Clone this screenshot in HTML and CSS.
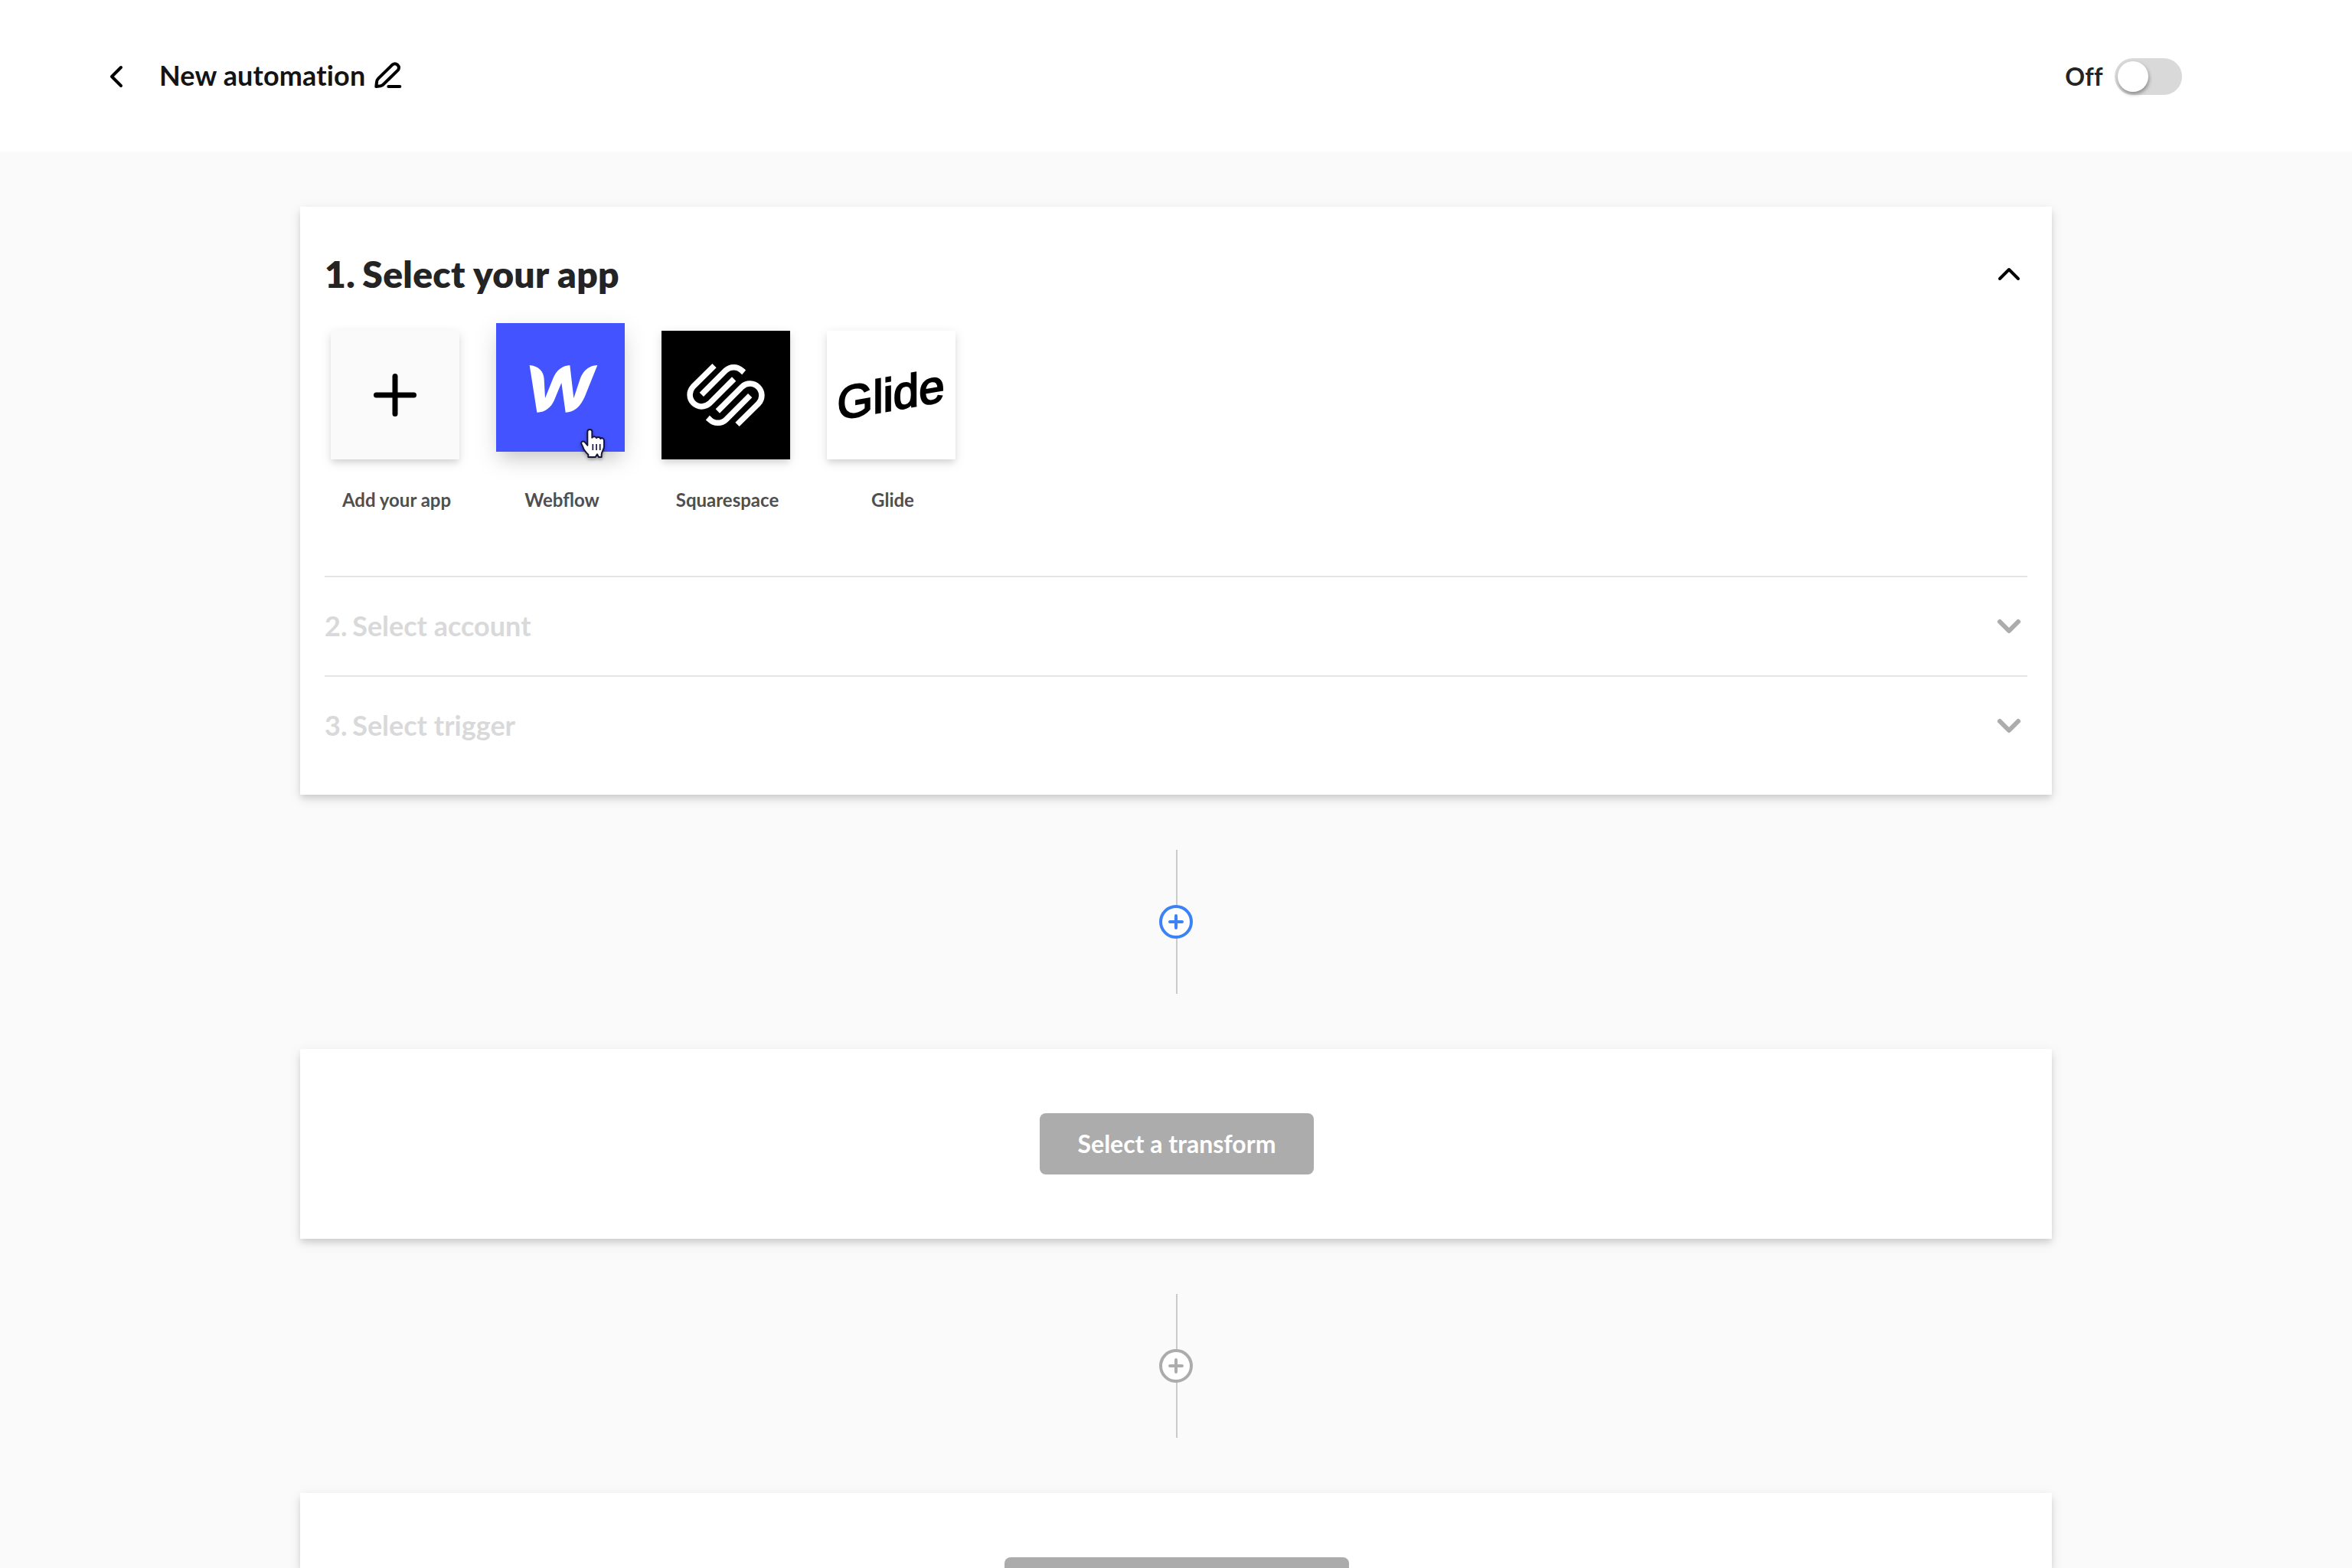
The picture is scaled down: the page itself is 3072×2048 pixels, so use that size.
FILE: index.html
```html
<!DOCTYPE html>
<html lang="en">
<head>
<meta charset="utf-8">
<title>New automation</title>
<link rel="stylesheet" href="styles.css">
</head>
<body>
<header class="topbar">
  <div class="topbar-left">
    <svg class="icon" viewBox="0 0 24 24" aria-hidden="true"><path d="M15 6 9 12l6 6"/></svg>
    <h1 class="name">New automation</h1>
    <svg class="pencil" viewBox="0 0 114 114" aria-hidden="true"><path d="M74 16 18 71Q12 77 12 85L10 102 27 100Q34 99 40 92L96 37A15.500 15.500 0 0 0 74 16ZM58 102H103"/></svg>
  </div>
  <div class="power">
    <span class="power-label">Off</span>
    <span class="switch"><span class="knob"></span></span>
  </div>
</header>

<main class="flow">
  <section class="card steps">
    <div class="step-head">
      <h2 class="step-title"><span class="num">1.</span> Select your app</h2>
      <svg class="icon" viewBox="0 0 24 24" aria-hidden="true"><path d="m6 15 6-6 6 6"/></svg>
    </div>
    <div class="apps">
      <div class="app">
        <div class="tile tile-add">
          <svg class="art" viewBox="0 0 168 168" aria-hidden="true"><path class="plus" d="M84 59.500V108.500M59.500 84H108.500"/></svg>
        </div>
        <span class="app-label">Add your app</span>
      </div>
      <div class="app">
        <div class="tile tile-webflow">
          <svg class="art" viewBox="54 66 504 504" aria-hidden="true"><path fill="#fff" d="M185 231C218 233 241 255 242 285L246 360 277 283C290 250 315 232 343 231L358 360 383 285C393 254 418 232 451 231L403 350C386 392 360 416 326 416L310 300 281 370C270 396 245 417 214 416Z"/></svg>
          <svg class="cursor" viewBox="380 474 105 126" aria-hidden="true">
            <path fill="#fff" stroke="#16163a" stroke-width="6" stroke-linejoin="round" d="M411 545V491C411 480 429 480 429 491V515C433 509 443 509 446 516C451 511 460 512 462 519C468 513 476 518 476 528V549C476 562 467 568 466 581V591H455L449 580 442 591H414V581C404 572 396 561 393 551L387 539C385 529 395 527 401 533Z"/>
            <path stroke="#16163a" stroke-width="5" d="M432 540V564M446 540V564M460 540V564"/>
          </svg>
        </div>
        <span class="app-label">Webflow</span>
      </div>
      <div class="app">
        <div class="tile tile-squarespace">
          <svg class="art" viewBox="72 96 504 504" aria-hidden="true"><path fill="none" stroke="#fff" stroke-width="22.500" d="M279 233 195.500 315.500A46 46 0 0 0 260.500 380.500L356 285M229 346 322.500 252.500A46 46 0 0 1 387.500 252.500L395 259M369 463 452.500 380.500A46 46 0 0 0 387.500 315.500L292 411M419 350 325.500 443.500A46 46 0 0 1 260.500 443.500L253 437"/></svg>
        </div>
        <span class="app-label">Squarespace</span>
      </div>
      <div class="app">
        <div class="tile tile-glide">
          <svg class="art" viewBox="0 0 168 168" role="img" aria-label="Glide"><text class="glide" transform="translate(13.500 116.500) skewY(-10)" textLength="140" lengthAdjust="spacingAndGlyphs">Glide</text></svg>
        </div>
        <span class="app-label">Glide</span>
      </div>
    </div>
    <div class="step-row">
      <span class="row-title"><span class="num">2.</span> Select account</span>
      <svg class="icon icon-muted" viewBox="0 0 24 24" aria-hidden="true"><path d="m6 9 6 6 6-6"/></svg>
    </div>
    <div class="step-row">
      <span class="row-title"><span class="num">3.</span> Select trigger</span>
      <svg class="icon icon-muted" viewBox="0 0 24 24" aria-hidden="true"><path d="m6 9 6 6 6-6"/></svg>
    </div>
  </section>

  <div class="connector">
    <svg class="add add-active" viewBox="0 0 44 44" aria-hidden="true"><circle cx="22" cy="22" r="20"/><path d="M22 14V30M14 22H30"/></svg>
  </div>

  <section class="card action">
    <button class="btn" type="button">Select a transform</button>
  </section>

  <div class="connector">
    <svg class="add" viewBox="0 0 44 44" aria-hidden="true"><circle cx="22" cy="22" r="20"/><path d="M22 14V30M14 22H30"/></svg>
  </div>

  <section class="card action action-last">
    <button class="btn btn-wide" type="button"></button>
  </section>
</main>
</body>
</html>
```
FILE: styles.css
```css
* {
  box-sizing: border-box;
}

body {
  margin: 0;
  height: 2048px;
  overflow: hidden;
  background: #fafafa;
  color: #242424;
  font-family: Lato, "Open Sans", sans-serif;
  font-weight: 700;
}

h1,
h2 {
  margin: 0;
}

.topbar {
  display: flex;
  justify-content: space-between;
  height: 198px;
  padding: 0 222px 2px 128px;
  background: #fff;
}

.topbar-left,
.power {
  display: flex;
  align-items: center;
}

.icon {
  display: block;
  width: 48px;
  height: 48px;
  fill: none;
  stroke: #000;
  stroke-width: 2;
  stroke-linecap: round;
  stroke-linejoin: round;
}

.topbar-left .icon {
  margin-top: 4px;
}

.name {
  margin-left: 32px;
  color: #141414;
  font-size: 36px;
  line-height: 44px;
  letter-spacing: .15px;
  font-variant-ligatures: none;
}

.pencil {
  width: 38px;
  height: 38px;
  margin-left: 11px;
  fill: none;
  stroke: #000;
  stroke-width: 12;
  stroke-linecap: round;
  stroke-linejoin: round;
}

.power {
  gap: 15px;
  padding-top: 4px;
}

.power-label {
  font-size: 32px;
  line-height: 40px;
  letter-spacing: .4px;
}

.switch {
  display: flex;
  align-items: center;
  width: 88px;
  height: 48px;
  padding: 4px;
  border-radius: 24px;
  background: #d9d9d9;
}

.knob {
  width: 40px;
  height: 40px;
  border-radius: 50%;
  background: #fff;
  box-shadow: 1px 3px 5px rgba(0, 0, 0, .36);
}

.flow {
  display: flex;
  flex-direction: column;
  align-items: center;
  gap: 72px;
  padding-top: 72px;
}

.card {
  flex: none;
  width: 2288px;
  background: #fff;
  box-shadow: 0 5px 15px rgba(0, 0, 0, .11), 0 5px 8px -1px rgba(0, 0, 0, .11);
}

.steps {
  height: 768px;
  padding: 60px 32px 0;
}

.step-head {
  display: flex;
  align-items: center;
  justify-content: space-between;
  height: 56px;
}

.step-title {
  font-size: 48px;
  font-weight: 800;
  line-height: 56px;
  letter-spacing: .3px;
}

.num {
  margin-right: -2px;
}

.apps {
  display: flex;
  gap: 48px;
  height: 366px;
  padding: 46px 8px 0;
}

.app {
  display: flex;
  flex-direction: column;
  width: 168px;
}

.tile {
  position: relative;
  width: 168px;
  height: 168px;
  box-shadow: 0 4px 14px rgba(0, 0, 0, .11), 0 5px 7px -1px rgba(0, 0, 0, .09);
}

.tile-add {
  background: #fafafa;
}

.tile-webflow {
  background: #4353ff;
  box-shadow: 0 10px 30px rgba(0, 0, 0, .13), 0 16px 20px -8px rgba(0, 0, 0, .1);
  transform: translateY(-10px);
}

.tile-squarespace {
  background: #000;
}

.tile-glide {
  background: #fff;
}

.art {
  display: block;
  width: 168px;
  height: 168px;
}

.plus {
  stroke: #000;
  stroke-width: 7;
  stroke-linecap: round;
}

.glide {
  font: 400 60.5px "Liberation Sans", Arial, sans-serif;
  stroke: #000;
  stroke-width: 2.2;
}

.cursor {
  position: absolute;
  left: 108.670px;
  top: 136px;
  width: 35px;
  height: 42px;
  filter: drop-shadow(0 2px 2px rgba(0, 0, 0, .35));
}

.app-label {
  margin: 38px -2px 0 2px;
  color: #4f4f4f;
  font-size: 24px;
  line-height: 29px;
  text-align: center;
}

.step-row {
  display: flex;
  align-items: center;
  justify-content: space-between;
  height: 130px;
  border-top: 2px solid #e5e5e5;
  color: #d9d9d9;
  font-size: 36px;
}

.row-title {
  padding-bottom: 2px;
}

.icon-muted {
  stroke: #acacac;
  stroke-width: 3;
}

.connector {
  display: flex;
  flex: none;
  align-items: center;
  justify-content: center;
  width: 44px;
  height: 188px;
  background: linear-gradient(#cbcbcb, #cbcbcb) 22px 0 / 2px 100% no-repeat;
}

.add {
  width: 44px;
  height: 44px;
  fill: #fff;
  stroke: #acacac;
  stroke-width: 4;
  stroke-linecap: round;
}

.add-active {
  stroke: #3b82f6;
}

.action {
  display: flex;
  align-items: center;
  justify-content: center;
  height: 248px;
  padding-left: 2px;
}

.btn {
  width: 358px;
  height: 80px;
  padding: 0;
  border: 0;
  border-radius: 8px;
  background: #acacac;
  color: #fff;
  font: inherit;
  font-size: 32px;
  line-height: 40px;
}

.action-last {
  align-items: flex-end;
  height: 98px;
}

.btn-wide {
  width: 450px;
  height: 14px;
  border-radius: 8px 8px 0 0;
}
```
